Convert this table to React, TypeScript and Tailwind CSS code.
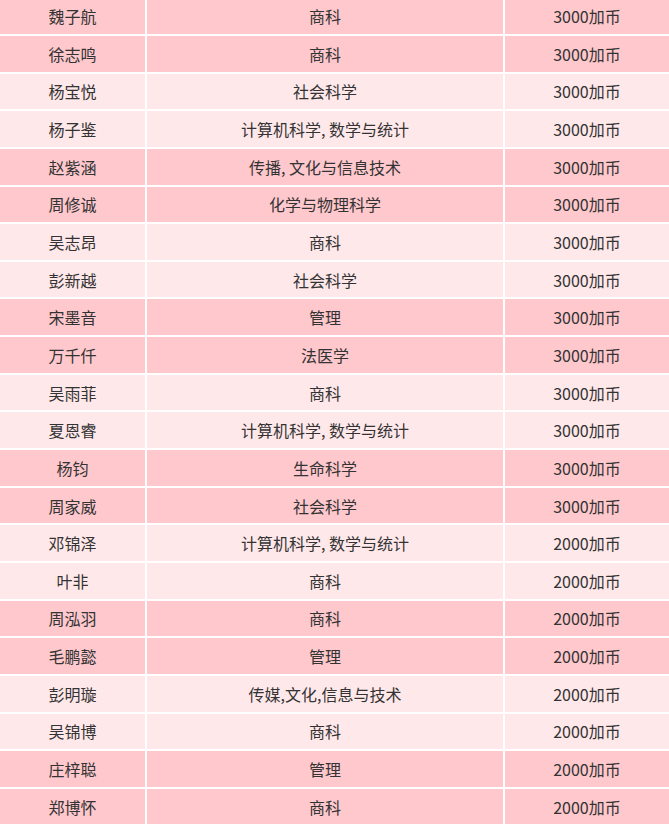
const rows: [string, string, string][] = [
  ["魏子航", "商科", "3000加币"],
  ["徐志鸣", "商科", "3000加币"],
  ["杨宝悦", "社会科学", "3000加币"],
  ["杨子鉴", "计算机科学, 数学与统计", "3000加币"],
  ["赵紫涵", "传播, 文化与信息技术", "3000加币"],
  ["周修诚", "化学与物理科学", "3000加币"],
  ["吴志昂", "商科", "3000加币"],
  ["彭新越", "社会科学", "3000加币"],
  ["宋墨音", "管理", "3000加币"],
  ["万千仟", "法医学", "3000加币"],
  ["吴雨菲", "商科", "3000加币"],
  ["夏恩睿", "计算机科学, 数学与统计", "3000加币"],
  ["杨钧", "生命科学", "3000加币"],
  ["周家威", "社会科学", "3000加币"],
  ["邓锦泽", "计算机科学, 数学与统计", "2000加币"],
  ["叶非", "商科", "2000加币"],
  ["周泓羽", "商科", "2000加币"],
  ["毛鹏懿", "管理", "2000加币"],
  ["彭明璇", "传媒,文化,信息与技术", "2000加币"],
  ["吴锦博", "商科", "2000加币"],
  ["庄梓聪", "管理", "2000加币"],
  ["郑博怀", "商科", "2000加币"],
];

export default function App() {
  return (
    <div className="h-[826px] w-[669px] overflow-hidden bg-white">
      <div
        className="mt-[-1.65px] flex flex-col gap-[2px] bg-white text-[16px] text-[#333333]"
        style={{ fontFamily: '"Noto Sans CJK SC", "Noto Sans", sans-serif' }}
      >
        {rows.map((r, i) => {
          // rows come in pairs: dark, dark, light, light ...
          const dark = Math.floor(i / 2) % 2 === 0;
          const bg = dark ? "bg-[#ffc8cd]" : "bg-[#ffe8ea]";
          return (
            <div key={i} className="grid grid-cols-[145px_356px_1fr] gap-x-[2px]">
              {r.map((c, j) => (
                <div key={j} className={`flex h-[35.65px] items-center justify-center ${bg}`}>
                  {c}
                </div>
              ))}
            </div>
          );
        })}
      </div>
    </div>
  );
}
